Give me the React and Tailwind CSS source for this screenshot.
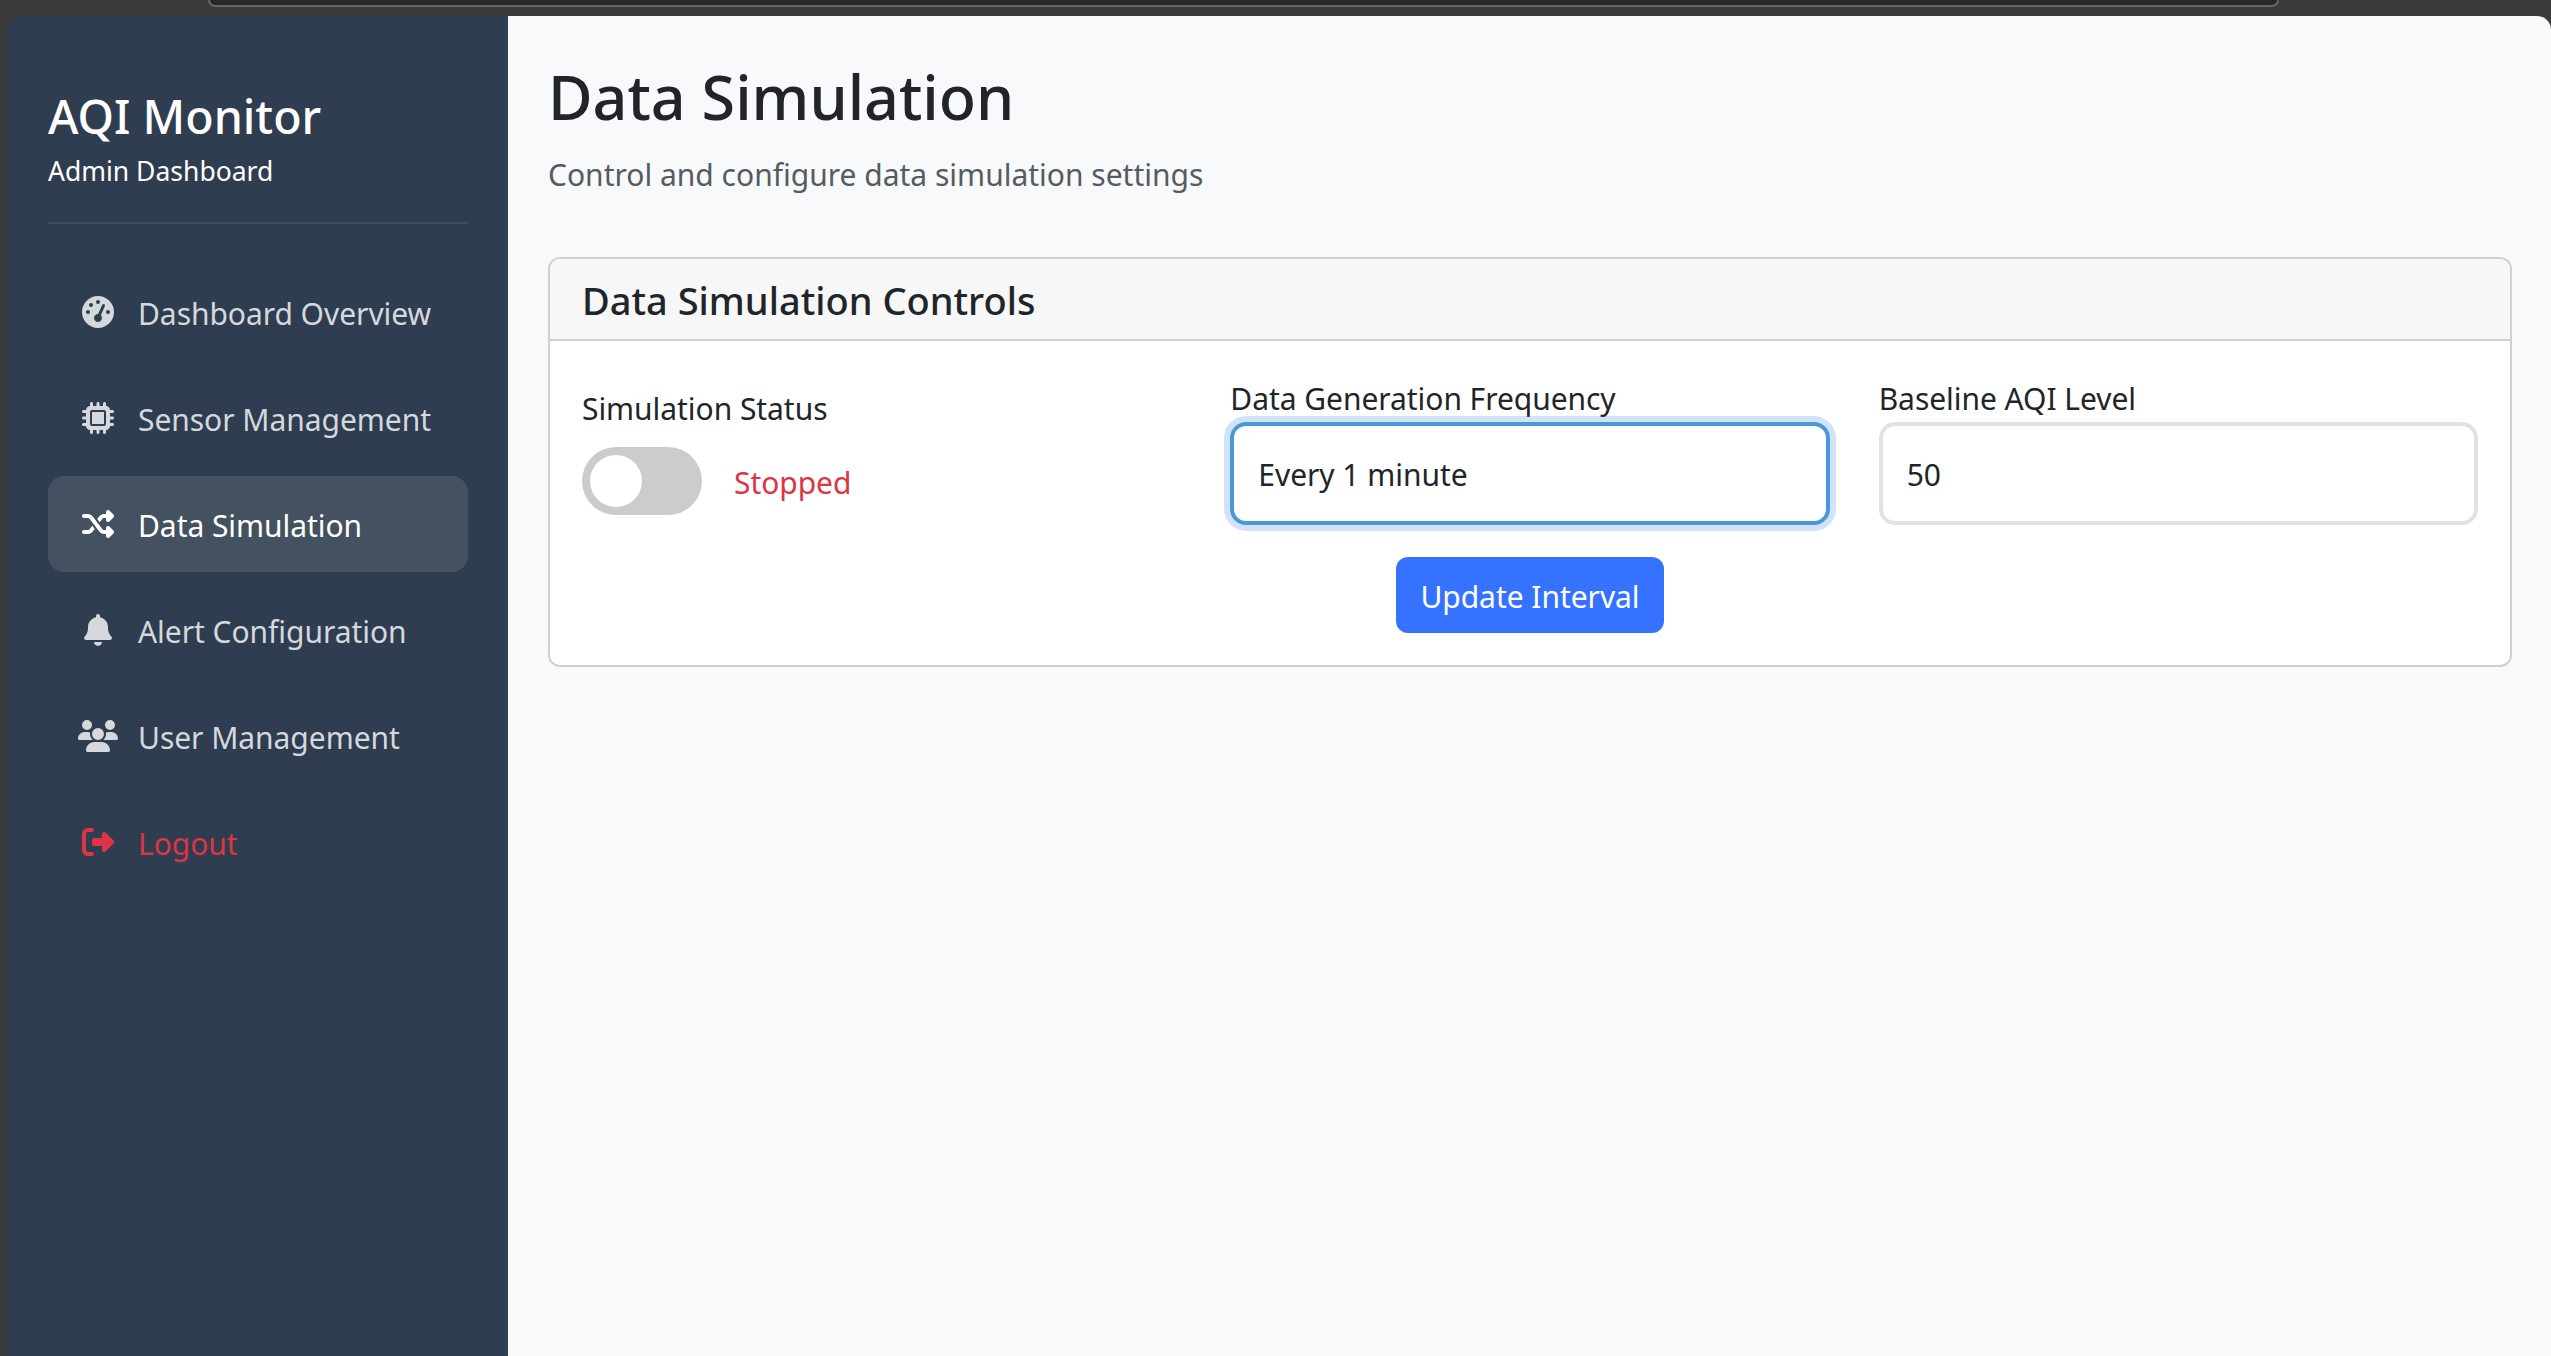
import React from 'react';
import { FaGaugeHigh, FaMicrochip, FaShuffle, FaBell, FaUsers, FaRightFromBracket } from 'react-icons/fa6';

const nav = [
  { label: 'Dashboard Overview', Icon: FaGaugeHigh },
  { label: 'Sensor Management', Icon: FaMicrochip },
  { label: 'Data Simulation', Icon: FaShuffle, active: true },
  { label: 'Alert Configuration', Icon: FaBell },
  { label: 'User Management', Icon: FaUsers },
  { label: 'Logout', Icon: FaRightFromBracket, danger: true },
];

export default function App() {
  return (
    <div className="h-screen flex flex-col overflow-hidden bg-[#3b3b3b] text-[#212529] font-['Noto_Sans',sans-serif] text-[30px] tracking-[-0.05px]">
      <div className="h-4 shrink-0">
        <div className="h-[7px] ml-[208px] mr-[272px] rounded-b-[16px] bg-[#282828] border-b-2 border-x-2 border-[#666666]" />
      </div>
      <div className="flex-1 flex pl-2 min-h-0">
        <aside className="w-[500px] shrink-0 bg-[#2f3d50] rounded-tl-[14px] px-10 pt-[72px]">
          <div className="pb-[31px] border-b-2 border-[#3f4d5e]">
            <h2 className="text-[46.5px] leading-[56px] font-medium text-white tracking-normal">AQI Monitor</h2>
            <p className="text-[26.5px] leading-[40px] mt-[7px] text-white tracking-normal">Admin Dashboard</p>
          </div>
          <nav className="mt-[40px] flex flex-col gap-[10px]">
            {nav.map(({ label, Icon, active, danger }) => (
              <a
                key={label}
                className={`h-[96px] flex items-center px-[30px] rounded-2xl ${active ? 'bg-[#435161] text-white' : danger ? 'text-[#dc3545]' : 'text-[#d5d8dc]'}`}
              >
                <Icon className="w-10 h-8 mr-5 shrink-0" />
                <span className="pt-[2px]">{label}</span>
              </a>
            ))}
          </nav>
        </aside>
        <main className="flex-1 min-w-0 bg-[#f8f9fa] rounded-tr-[14px] pl-10 pr-[39px] pt-[39px]">
          <h1 className="text-[61px] leading-[84px] font-medium tracking-normal">Data Simulation</h1>
          <p className="mt-[13px] leading-[46px] text-[#555b61] tracking-normal">Control and configure data simulation settings</p>
          <section className="mt-[59px] border-2 border-[#d0d0d0] rounded-xl bg-white overflow-hidden">
            <div className="h-[82px] flex items-center px-8 bg-[#f7f7f7] border-b-2 border-[#d0d0d0]">
              <h3 className="text-[38px] font-medium tracking-normal pt-[2px]">Data Simulation Controls</h3>
            </div>
            <div className="px-8 pt-[40px] pb-[32px] grid grid-cols-3 gap-x-[49px]">
              <div className="pt-[4px]">
                <label className="block leading-[48px]">Simulation Status</label>
                <div className="mt-[14px] flex items-center gap-8">
                  <div className="w-[120px] h-[68px] rounded-full bg-[#cccccc] p-2 shrink-0">
                    <div className="w-[52px] h-[52px] rounded-full bg-white" />
                  </div>
                  <span className="pt-[3px] text-[#dc3545]">Stopped</span>
                </div>
              </div>
              <div className="flex flex-col">
                <label className="block leading-[48px] -mt-[6px] -mb-[1px]">Data Generation Frequency</label>
                <select defaultValue="1" className="appearance-none h-[103px] px-6 pt-[2px] bg-white border-4 border-[#4a98d9] rounded-2xl ring-[6px] ring-[#4a90e2]/25 outline-none">
                  <option value="1">Every 1 minute</option>
                </select>
                <button className="self-center mt-[32px] w-[268px] h-[76px] pt-[2px] rounded-xl bg-[#3572ff] text-white">Update Interval</button>
              </div>
              <div className="flex flex-col">
                <label className="block leading-[48px] -mt-[6px] -mb-[1px]">Baseline AQI Level</label>
                <input defaultValue="50" className="h-[103px] px-6 pt-[2px] bg-white border-4 border-[#e2e2e2] rounded-2xl outline-none" />
              </div>
            </div>
          </section>
        </main>
      </div>
    </div>
  );
}
